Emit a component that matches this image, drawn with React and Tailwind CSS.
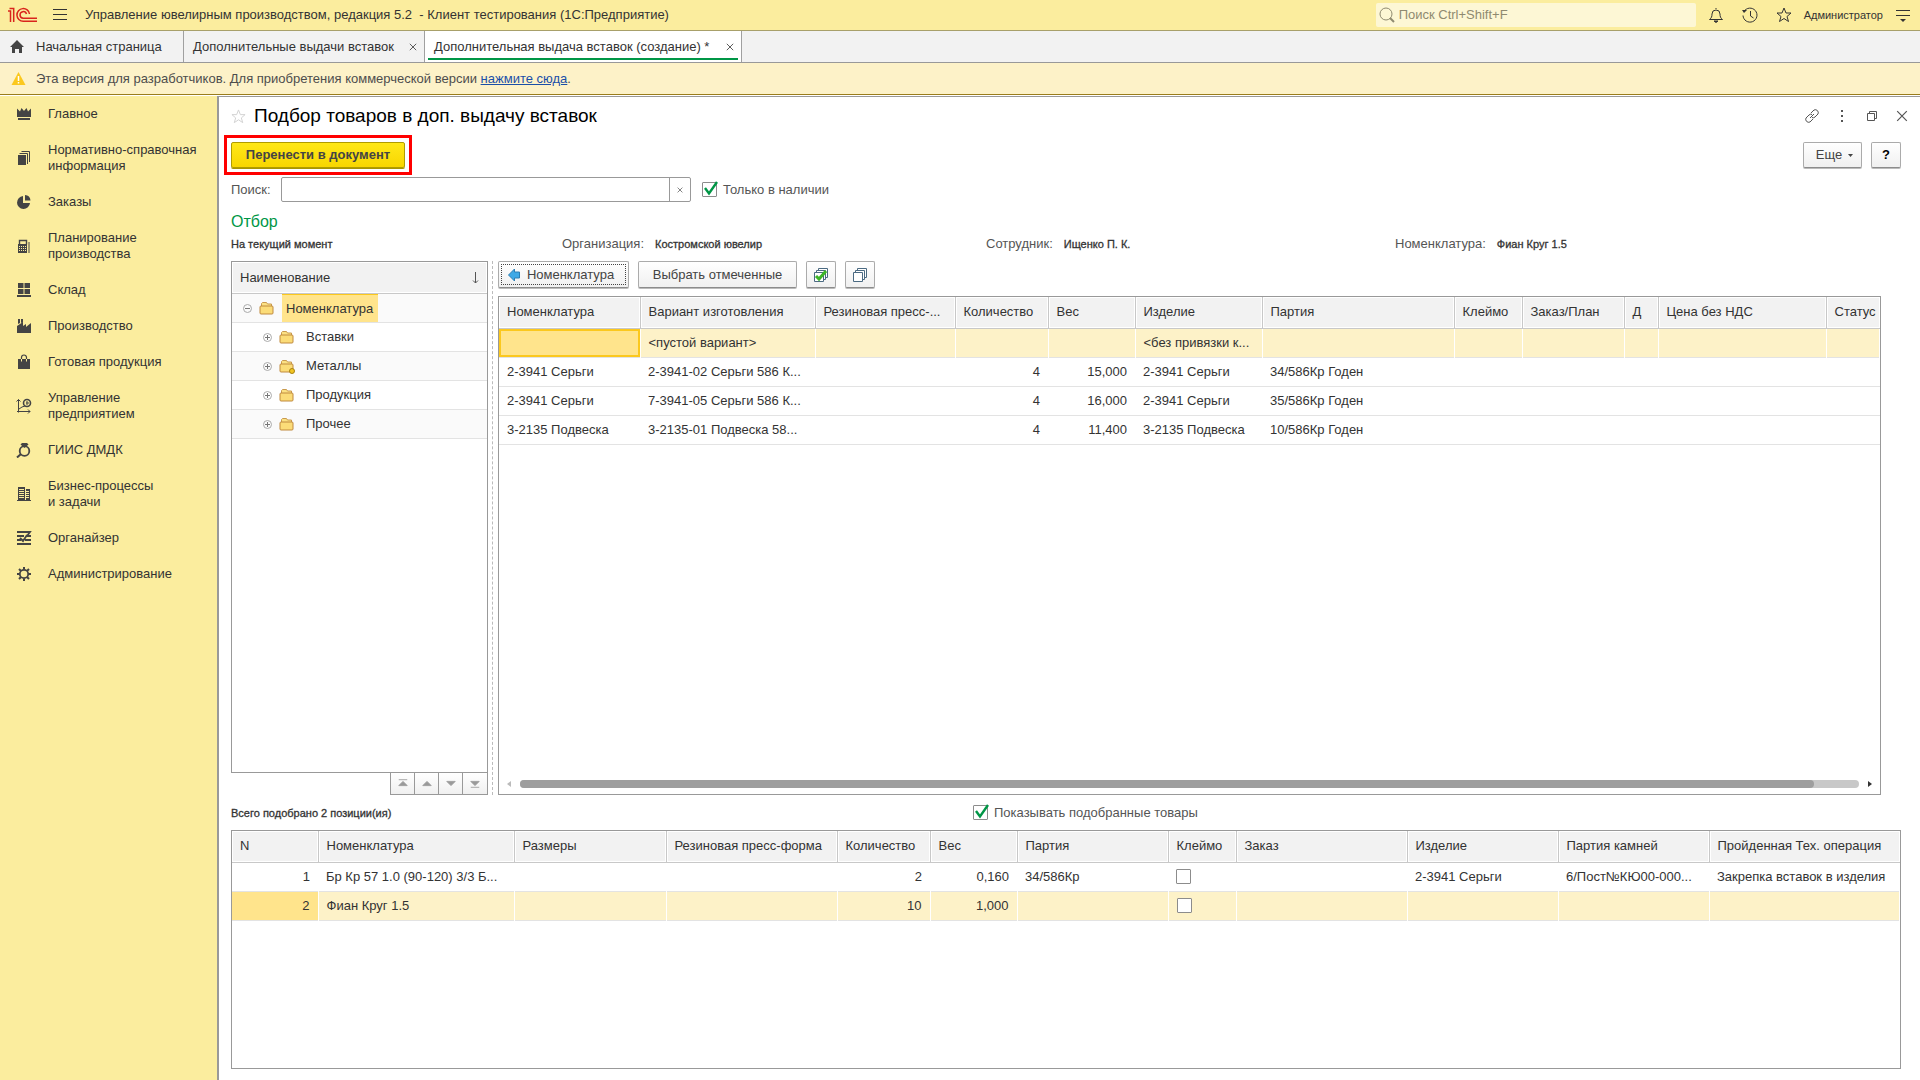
import React, { useState } from "react";

const MENU = [
  { label: "Главное", icon: "crown" },
  { label: "Нормативно-справочная\nинформация", icon: "books" },
  { label: "Заказы", icon: "pie" },
  { label: "Планирование\nпроизводства", icon: "calc" },
  { label: "Склад", icon: "blocks" },
  { label: "Производство", icon: "factory" },
  { label: "Готовая продукция", icon: "bag" },
  { label: "Управление\nпредприятием", icon: "chart" },
  { label: "ГИИС ДМДК", icon: "ring" },
  { label: "Бизнес-процессы\nи задачи", icon: "building" },
  { label: "Органайзер", icon: "organizer" },
  { label: "Администрирование", icon: "gear" },
];

const TREE = [
  { label: "Вставки" },
  { label: "Металлы", marked: true },
  { label: "Продукция" },
  { label: "Прочее" },
];

const STOCK_COLUMNS = [
  { title: "Номенклатура", width: "w-[141px]" },
  { title: "Вариант изготовления", width: "w-[175px]" },
  { title: "Резиновая пресс-...", width: "w-[140px]" },
  { title: "Количество", width: "w-[93px]", right: true },
  { title: "Вес", width: "w-[87px]", right: true },
  { title: "Изделие", width: "w-[127px]" },
  { title: "Партия", width: "w-[192px]" },
  { title: "Клеймо", width: "w-[68px]" },
  { title: "Заказ/План", width: "w-[102px]" },
  { title: "Д", width: "w-[34px]" },
  { title: "Цена без НДС", width: "w-[168px]" },
  { title: "Статус", width: "" },
];

const STOCK_ROWS = [
  ["", "<пустой вариант>", "", "", "", "<без привязки к...", "", "", "", "", "", ""],
  ["2-3941 Серьги", "2-3941-02 Серьги 586 К...", "", "4", "15,000", "2-3941 Серьги", "34/586Кр Годен", "", "", "", "", ""],
  ["2-3941 Серьги", "7-3941-05 Серьги 586 К...", "", "4", "16,000", "2-3941 Серьги", "35/586Кр Годен", "", "", "", "", ""],
  ["3-2135 Подвеска", "3-2135-01 Подвеска 58...", "", "4", "11,400", "3-2135 Подвеска", "10/586Кр Годен", "", "", "", "", ""],
];

const PICKED_COLUMNS = [
  { title: "N", width: "w-[86px]", right: true },
  { title: "Номенклатура", width: "w-[196px]" },
  { title: "Размеры", width: "w-[152px]" },
  { title: "Резиновая пресс-форма", width: "w-[171px]" },
  { title: "Количество", width: "w-[93px]", right: true },
  { title: "Вес", width: "w-[87px]", right: true },
  { title: "Партия", width: "w-[151px]" },
  { title: "Клеймо", width: "w-[68px]", check: true },
  { title: "Заказ", width: "w-[171px]" },
  { title: "Изделие", width: "w-[151px]" },
  { title: "Партия камней", width: "w-[151px]" },
  { title: "Пройденная Тех. операция", width: "" },
];

const PICKED_ROWS = [
  ["1", "Бр Кр 57 1.0 (90-120) 3/3 Б...", "", "", "2", "0,160", "34/586Кр", "", "", "2-3941 Серьги", "6/Пост№КЮ00-000...", "Закрепка вставок в изделия"],
  ["2", "Фиан Круг 1.5", "", "", "10", "1,000", "", "", "", "", "", ""],
];

const MENU_ICONS = {
  crown: (
    <path d="M1 2.500l3 3L5.500 2 8 5l2.500-3L12 5.500l3-3V11H1zM2 12h12v2H2z" fill="currentColor" />
  ),
  books: (
    <>
      <path d="M2 5h8v10H2z" fill="currentColor" />
      <path d="M3.500 3.500h8V14M5.500 1.500h8V12" fill="none" stroke="currentColor" />
    </>
  ),
  pie: (
    <path d="M7 2v7h7a6.500 6.500 0 1 1-7-7zM9 1a6 6 0 0 1 5.500 5.500H9z" fill="currentColor" />
  ),
  calc: (
    <>
      <path d="M3.500 6.500v-4h7v4" fill="none" stroke="currentColor" strokeWidth="1.400" />
      <path d="M2 6h9v9H2zM12.500 4h1v11h-1z" fill="currentColor" />
      <path d="M3 8.500h7M3 10.500h7M3 12.500h7" stroke="#fbed9e" strokeDasharray="1 1" />
    </>
  ),
  blocks: (
    <path d="M2 1h5.500v5H2zM8.500 1H14v5H8.500zM2 7h5.500v5H2zM8.500 7H14v5H8.500zM1 13h14v2H1z" fill="currentColor" />
  ),
  factory: (
    <path d="M2 1h2v4l-2 1zM5 1h2v3L5 5zM1 8l6-4v4l3-2v3l5-4v10H1z" fill="currentColor" />
  ),
  bag: (
    <>
      <path d="M2 5h12v10H2z" fill="currentColor" />
      <path d="M5.500 7V3.500a2.500 2.500 0 0 1 5 0V7" fill="none" stroke="currentColor" strokeWidth="1.200" />
      <path d="M5.500 5v2.500M10.500 5v2.500" stroke="#fbed9e" />
    </>
  ),
  chart: (
    <>
      <path d="M2.500 1.500v13M.5 3.500l2-2 2 2M1 13.500h13M12 11.500l2 2-2 2M3 11l3-2 3-1" fill="none" stroke="currentColor" />
      <circle cx="11" cy="5" r="3.500" fill="none" stroke="currentColor" strokeWidth="1.600" />
      <path d="M10 5h3M11 3v4" stroke="currentColor" />
    </>
  ),
  ring: (
    <>
      <circle cx="8.500" cy="9" r="4.800" fill="none" stroke="currentColor" strokeWidth="1.800" />
      <path d="M6 1h5l1.500 1.500L8.500 6 4.500 2.500z" fill="currentColor" />
      <path d="M5 12l-4 3.500" stroke="currentColor" strokeWidth="2" />
    </>
  ),
  building: (
    <>
      <path d="M2 1h7v13H2zM10 3h4v11h-4z" fill="currentColor" />
      <path d="M3 3.500h5M3 5.500h5M3 7.500h5M3 9.500h5M3 11.500h5M10 5.500h3M10 7.500h3M10 9.500h3M10 11.500h3" stroke="#fbed9e" />
      <path d="M1 14h14v1H1z" fill="currentColor" />
    </>
  ),
  organizer: (
    <path d="M1 2h13l-3 4M1 6h7M11 6h4M1 10h4M9 10h6M1 14h14M11 5l-4 6-3-3" fill="none" stroke="currentColor" strokeWidth="1.800" />
  ),
  gear: (
    <>
      <circle cx="8" cy="8" r="4.200" fill="none" stroke="currentColor" strokeWidth="1.800" />
      <path d="M8 1v2.500M8 12.500V15M1 8h2.500M12.500 8H15M3 3l2 2M11 11l2 2M13 3l-2 2M5 11l-2 2" stroke="currentColor" strokeWidth="2" />
    </>
  ),
};

const Folder = ({ marked }) => (
  <svg className="h-4 w-4 shrink-0" viewBox="0 0 16 16">
    <path d="M2.500 6V3.500l1-1h4l1 1.500h4V6" fill="#fbe183" stroke="#c99a4e" />
    <rect x="1" y="6" width="13" height="8" rx="1" fill="#fbdc78" stroke="#c08a3e" />
    {marked && <circle cx="13" cy="13" r="2.500" fill="#f2c522" stroke="#a8820f" />}
  </svg>
);

const Expander = ({ open }) => (
  <svg className="h-[9px] w-[9px]" viewBox="0 0 9 9" fill="none">
    <circle cx="4.500" cy="4.500" r="4" stroke="#aaa" />
    <path d={open ? "M2 4.500h5" : "M2 4.500h5M4.500 2v5"} stroke="#777" />
  </svg>
);

const Cross = ({ className }) => (
  <svg className={className} viewBox="0 0 10 10" fill="none" stroke="currentColor">
    <path d="M1 1l8 8M9 1L1 9" />
  </svg>
);

const Star = ({ className }) => (
  <svg className={className} viewBox="0 0 16 16" fill="none" stroke="currentColor">
    <path d="M8 1l2 5h5l-4 3.500 1.500 5L8 11.500l-4.500 3 1.500-5L1 6h5z" />
  </svg>
);

const Logo = () => (
  <svg className="h-4 w-[30px]" viewBox="0 0 30 16" fill="none" stroke="#d9241c" strokeWidth="1.500">
    <path d="M0 4h2.500v11M1.500 1.500H5.700V15" />
    <path d="M21.500 7a6.300 6.300 0 1 0-6.300 7.200H29" />
    <path d="M18.500 7a3.300 3.300 0 1 0-3.300 4.200H29" />
  </svg>
);

const CheckBox = ({ checked, onChange, label, id }) => (
  <span className="relative inline-flex h-[15px] w-[15px] shrink-0">
    <input
      id={id}
      type="checkbox"
      aria-label={label}
      checked={checked}
      onChange={onChange}
      className="h-[15px] w-[15px] appearance-none rounded-[1px] border border-[#8c8c8c] bg-white"
    />
    {checked && (
      <svg className="pointer-events-none absolute -top-px left-0 h-4 w-4" viewBox="0 0 16 16" fill="none">
        <path d="M3 7l4 5.500L15 1" stroke="#009646" strokeWidth="2.400" />
      </svg>
    )}
  </span>
);

const buttonStyle =
  "flex items-center justify-center rounded-xs border border-[#ababab] border-b-[#8c8c8c] bg-gradient-to-b from-white to-[#f0f0f0] text-[#444] shadow-[0_1px_0_#bbb]";

const Grid = ({ columns, rows, selected, framed, label }) => {
  const [marks, setMarks] = useState({});

  return (
    <table className="w-full table-fixed border-collapse text-left whitespace-nowrap" aria-label={label}>
      <thead>
        <tr className="h-[31px]">
          {columns.map((col) => (
            <th
              key={col.title}
              className={`${col.width} border-r border-b border-[#c8c8c8] bg-[#f2f2f2] pl-2 font-normal shadow-[inset_0_0_0_1px_#fff] last:border-r-0`}
            >
              {col.title}
            </th>
          ))}
        </tr>
      </thead>
      <tbody>
        {rows.map((row, r) => (
          <tr key={r} className={`h-[29px] border-b border-[#e3e3e3] ${r === selected ? "bg-[#fdf2c8]" : ""}`}>
            {row.map((cell, c) => {
              const isSelected = r === selected;
              const current = isSelected && c === 0;
              return (
                <td
                  key={c}
                  className={`pl-2 ${columns[c].right ? "pr-2 text-right" : ""} ${
                    isSelected ? "border-r border-r-white" : ""
                  } ${current ? "bg-[#ffe48c]" : ""} ${current && framed ? "shadow-[inset_0_0_0_2px_#fbc81e]" : ""}`}
                >
                  {columns[c].check ? (
                    <span className="flex">
                      <CheckBox
                        label={`Клеймо, строка ${r + 1}`}
                        checked={!!marks[r]}
                        onChange={() => setMarks({ ...marks, [r]: !marks[r] })}
                      />
                    </span>
                  ) : (
                    cell
                  )}
                </td>
              );
            })}
          </tr>
        ))}
      </tbody>
    </table>
  );
};

const TopBar = () => (
  <header className="flex h-[31px] items-center border-b border-[#a8a06a] bg-[#fbed9e] pl-2">
    <Logo />
    <button aria-label="Меню" className="ml-[14px]">
      <svg className="h-4 w-4" viewBox="0 0 16 16" stroke="#333">
        <path d="M1 2.500h14M1 7.500h14M1 12.500h14" />
      </svg>
    </button>
    <h1 className="ml-[17px] text-[13px] whitespace-pre">
      Управление ювелирным производством, редакция 5.2{"  "}- Клиент тестирования (1С:Предприятие)
    </h1>
    <label className="ml-auto flex h-6 w-80 items-center gap-1 rounded-xs bg-[#fdf7d5] px-[3px] text-[#8f8a70]">
      <svg className="h-4 w-4 shrink-0" viewBox="0 0 16 16" fill="none" stroke="currentColor">
        <circle cx="7" cy="7" r="6" />
        <path d="M11 11l4 4" strokeWidth="2" />
      </svg>
      <input
        type="search"
        aria-label="Глобальный поиск"
        placeholder="Поиск Ctrl+Shift+F"
        className="w-full bg-transparent text-[13px] outline-none placeholder:text-[#8f8a70]"
      />
    </label>
    <div className="ml-3 flex items-center gap-[18px]">
      <button aria-label="Оповещения">
        <svg className="h-4 w-4" viewBox="0 0 16 16" fill="none" stroke="#333">
          <path d="M8 1v1M1.500 12.500c2-1.500 2.500-3 2.500-5.500a4 4 0 0 1 8 0c0 2.500.5 4 2.500 5.500z" />
          <path d="M6 14h4l-2 1.500z" fill="#333" />
        </svg>
      </button>
      <button aria-label="История">
        <svg className="h-4 w-4" viewBox="0 0 16 16" fill="none" stroke="#333">
          <path d="M2 4.500a7 7 0 1 1-1 4M8.500 4v5l3 2" />
          <path d="M0 3h5L2 6z" fill="#333" stroke="none" />
        </svg>
      </button>
      <button aria-label="Избранное">
        <Star className="h-4 w-4 text-[#333]" />
      </button>
    </div>
    <span className="ml-3 text-[11px]">Администратор</span>
    <button aria-label="Сервис" className="mr-[9px] ml-3">
      <svg className="h-4 w-4" viewBox="0 0 16 16" stroke="#333">
        <path d="M1 3.500h14M1 8.500h14" />
        <path d="M5 12h6l-3 3z" fill="#333" stroke="none" />
      </svg>
    </button>
  </header>
);

const Tabs = () => (
  <nav className="flex h-8 border-b border-[#999] bg-[#f2f2f2] text-[13px]">
    <a href="#home" className="flex w-[184px] items-center border-r border-[#a0a0a0] pl-[10px]">
      <svg className="h-[14px] w-[14px]" viewBox="0 0 14 14" fill="#444">
        <path d="M7 0l7 7h-2v6H9V9H5v4H2V7H0z" />
      </svg>
      <span className="ml-3">Начальная страница</span>
    </a>
    <div className="flex w-[241px] items-center justify-between border-r border-[#a0a0a0] pr-[7px] pl-[9px]">
      <a href="#list">Дополнительные выдачи вставок</a>
      <button aria-label="Закрыть вкладку">
        <Cross className="h-2 w-2" />
      </button>
    </div>
    <div className="relative flex w-[317px] items-center justify-between border-r border-[#a0a0a0] bg-white pr-[7px] pl-[9px]">
      <a href="#create">Дополнительная выдача вставок (создание) *</a>
      <button aria-label="Закрыть вкладку">
        <Cross className="h-2 w-2" />
      </button>
      <span className="absolute inset-x-[3px] bottom-[2px] h-[2px] bg-[#009646]" />
    </div>
  </nav>
);

const Sidebar = () => (
  <aside className="w-[217px] shrink-0 bg-[#fbed9e]">
    {MENU.map((item) => (
      <a
        key={item.label}
        href="#section"
        className="flex items-center py-[10px] pr-3 pl-4 text-[13px] leading-4 text-[#333]"
      >
        <svg className="h-4 w-4 shrink-0 text-[#444]" viewBox="0 0 16 16">
          {MENU_ICONS[item.icon]}
        </svg>
        <span className="ml-4 whitespace-pre-line">{item.label}</span>
      </a>
    ))}
  </aside>
);

const Tree = () => (
  <div className="flex w-[257px] shrink-0 flex-col">
    <div className="flex-1 border border-[#999]">
      <div className="flex h-8 items-center justify-between border-b border-[#c8c8c8] bg-[#f2f2f2] px-2 shadow-[inset_0_0_0_1px_#fff]">
        <span>Наименование</span>
        <svg className="h-3 w-[7px]" viewBox="0 0 7 12" fill="none" stroke="#555">
          <path d="M3.500 0v11M1 8.500L3.500 11 6 8.500" />
        </svg>
      </div>
      <ul>
        <li className="flex h-[29px] items-center border-b border-[#e3e3e3] bg-[#fafafa] pl-[11px]">
          <Expander open />
          <span className="ml-[7px] flex">
            <Folder />
          </span>
          <span className="ml-[7px] flex h-full items-center border-t border-[#fbc81e] bg-[#ffe48c] pr-[5px] pl-1">
            Номенклатура
          </span>
        </li>
        {TREE.map((node) => (
          <li
            key={node.label}
            className="flex h-[29px] items-center border-b border-[#e3e3e3] pl-[31px] even:bg-white odd:bg-[#fafafa]"
          >
            <Expander />
            <span className="ml-[7px] flex">
              <Folder marked={node.marked} />
            </span>
            <span className="ml-[11px]">{node.label}</span>
          </li>
        ))}
      </ul>
    </div>
    <div className="ml-auto flex h-[22px] divide-x divide-[#999] border border-t-0 border-[#999]">
      {[
        ["В начало", "M2 2h10M7 4l5 5H2z"],
        ["Вверх", "M7 4l5 5H2z"],
        ["Вниз", "M7 9l5-5H2z"],
        ["В конец", "M7 9l5-5H2zM2 11h10"],
      ].map(([name, d]) => (
        <button key={name} aria-label={name} className="flex w-6 items-center justify-center bg-gradient-to-b from-white to-[#f0f0f0]">
          <svg className="h-[11px] w-3" viewBox="0 0 14 13" fill="#999" stroke="#999">
            <path d={d} strokeWidth="1" />
          </svg>
        </button>
      ))}
    </div>
  </div>
);

const Filter = ({ label, value }) => (
  <div className="flex items-center">
    {label && <span className="mr-[11px] text-[13px] text-[#555]">{label}</span>}
    <span className="text-[11px] text-[#333] [-webkit-text-stroke:0.3px_#333]">{value}</span>
  </div>
);

const App = () => {
  const [search, setSearch] = useState("");
  const [inStock, setInStock] = useState(true);
  const [showPicked, setShowPicked] = useState(true);

  return (
    <div className="flex min-h-screen flex-col bg-white font-['Liberation_Sans',Arial,sans-serif] text-[13px] leading-4 text-[#333]">
      <TopBar />
      <Tabs />

      {/* Developer version notice */}
      <div className="flex h-8 items-center border-b border-[#9a7d1c] bg-[#fdf2c8] pl-[11px] text-[13px] text-[#4d4d4d]">
        <svg className="mr-[10px] h-[15px] w-[15px]" viewBox="0 0 15 15">
          <path d="M7.500 1L14.500 14H.5z" fill="#fbc81e" />
          <path d="M7.500 5v5M7.500 11v1.500" stroke="#fff" strokeWidth="1.500" />
        </svg>
        <span>
          Эта версия для разработчиков. Для приобретения коммерческой версии{" "}
          <a href="#buy" className="text-[#1a4fa8] underline">нажмите сюда</a>.
        </span>
      </div>

      <div className="flex flex-1 pt-px">
        <Sidebar />

        <main className="flex min-w-0 flex-1 flex-col border-t border-l-2 border-[#999] bg-white pt-[7px] pr-[19px] pb-[11px] pl-3">
          {/* Window title */}
          <div className="flex h-6 items-center">
            <Star className="h-[15px] w-[15px] text-[#d0d0d0]" />
            <h2 className="ml-2 text-[19px] leading-6 text-black">Подбор товаров в доп. выдачу вставок</h2>
            <div className="-mr-[9px] ml-auto flex items-center gap-[14px] text-[#555]">
              <button aria-label="Ссылка">
                <svg className="h-4 w-4" viewBox="0 0 16 16" fill="none" stroke="currentColor">
                  <path d="M7 5l3-3a3 3 0 0 1 4 4l-3 3a2.500 2.500 0 0 1-3 .5M9 11l-3 3a3 3 0 0 1-4-4l3-3a2.500 2.500 0 0 1 3-.5M6 10l4-4" />
                </svg>
              </button>
              <button aria-label="Действия">
                <svg className="h-4 w-4" viewBox="0 0 16 16" fill="currentColor">
                  <path d="M7 2h2v2H7zM7 7h2v2H7zM7 12h2v2H7z" />
                </svg>
              </button>
              <button aria-label="Развернуть">
                <svg className="h-4 w-4" viewBox="0 0 16 16" fill="none" stroke="currentColor">
                  <path d="M3.500 5.500h7v7h-7zM5.500 5V3.500h7v7H11" />
                </svg>
              </button>
              <button aria-label="Закрыть" className="flex h-4 w-4 items-center justify-center">
                <Cross className="h-3 w-3" />
              </button>
            </div>
          </div>

          {/* Command bar */}
          <div className="mt-[7px] flex h-10 items-center">
            <div className="-ml-[7px] border-3 border-[#ff0000] p-1">
              <button className="h-[26px] w-[174px] rounded-xs border border-[#b09c00] bg-gradient-to-b from-[#ffe817] to-[#f8d600] text-[13px] font-bold text-[#444] shadow-[0_1px_0_#a89500]">
                Перенести в документ
              </button>
            </div>
            <button className={`${buttonStyle} ml-auto h-[26px] w-[59px] gap-[6px] pl-1`}>
              Еще
              <svg className="h-[3px] w-[5px]" viewBox="0 0 5 3" fill="#444">
                <path d="M0 0h5L2.500 3z" />
              </svg>
            </button>
            <button className={`${buttonStyle} ml-[9px] h-[26px] w-[30px] font-bold text-black`}>?</button>
          </div>

          {/* Search */}
          <div className="mt-[2px] flex h-[25px] items-center">
            <label htmlFor="search" className="w-[50px] text-[#555]">Поиск:</label>
            <div className="flex h-[25px] w-[410px] rounded-xs border border-[#999]">
              <input
                id="search"
                type="text"
                value={search}
                onChange={(e) => setSearch(e.target.value)}
                className="min-w-0 flex-1 px-2 outline-none"
              />
              <button
                aria-label="Очистить"
                onClick={() => setSearch("")}
                className="flex w-[21px] items-center justify-center border-l border-[#999]"
              >
                <Cross className="h-[6px] w-[6px]" />
              </button>
            </div>
            <span className="ml-[11px] flex">
              <CheckBox id="stock" checked={inStock} onChange={() => setInStock(!inStock)} />
            </span>
            <label htmlFor="stock" className="ml-[6px] text-[#555]">Только в наличии</label>
          </div>

          {/* Filters */}
          <h3 className="mt-[10px] text-[16px] leading-5 text-[#009646]">Отбор</h3>
          <div className="mt-1 mb-[9px] grid h-4 grid-cols-[331px_424px_409px_1fr] items-center">
            <Filter value="На текущий момент" />
            <Filter label="Организация:" value="Костромской ювелир" />
            <Filter label="Сотрудник:" value="Ищенко П. К." />
            <Filter label="Номенклатура:" value="Фиан Круг 1.5" />
          </div>

          <div className="flex flex-[537_1_0px] pr-5">
            <Tree />
            <div className="mr-[5px] ml-1 border-l border-dashed border-[#bbb]" />
            <section className="flex min-w-0 flex-1 flex-col">
              <div className="flex h-[27px] gap-[9px]">
                <button className={`${buttonStyle} w-[131px] gap-[7px] pr-[5px] outline-1 -outline-offset-4 outline-dotted outline-[#444]`}>
                  <svg className="h-[14px] w-3" viewBox="0 0 12 14">
                    <path d="M.5 7L6.500 1v3h5v6h-5v3z" fill="#3fa9e6" stroke="#2d7fb4" />
                  </svg>
                  Номенклатура
                </button>
                <button className={`${buttonStyle} w-[159px]`}>Выбрать отмеченные</button>
                <button aria-label="Отметить все" className={`${buttonStyle} w-[30px]`}>
                  <svg className="h-4 w-4" viewBox="0 0 16 16" fill="#fff" stroke="#4b6a82">
                    <path d="M5.500 1.500h9v9h-9z" />
                    <path d="M3.500 3.500h9v9h-9z" />
                    <path d="M1.500 5.500h9v9h-9z" />
                    <path d="M3 9l3 3 7-8" fill="none" stroke="#3db528" strokeWidth="3" />
                  </svg>
                </button>
                <button aria-label="Снять отметки" className={`${buttonStyle} w-[30px]`}>
                  <svg className="h-4 w-4" viewBox="0 0 16 16" fill="#fff" stroke="#4b6a82">
                    <path d="M5.500 1.500h9v9h-9z" />
                    <path d="M3.500 3.500h9v9h-9z" />
                    <path d="M1.500 5.500h9v9h-9z" />
                  </svg>
                </button>
              </div>

              <div className="mt-2 flex flex-1 flex-col border border-[#999]">
                <Grid label="Остатки" columns={STOCK_COLUMNS} rows={STOCK_ROWS} selected={0} framed />
                <div className="mt-auto flex h-5 items-center pr-2 pl-2">
                  <svg className="h-[6px] w-1" viewBox="0 0 4 6" fill="#bbb">
                    <path d="M4 0v6L0 3z" />
                  </svg>
                  <div className="mx-[9px] h-2 flex-1 rounded-full bg-[#c8c8c8]">
                    <div className="h-2 w-29/30 rounded-full bg-[#9e9e9e]" />
                  </div>
                  <svg className="h-[6px] w-1" viewBox="0 0 4 6" fill="#333">
                    <path d="M0 0v6l4-3z" />
                  </svg>
                </div>
              </div>
            </section>
          </div>

          <div className="flex h-[35px] items-center">
            <div className="w-[742px]">
              <Filter value="Всего подобрано 2 позиции(ия)" />
            </div>
            <CheckBox id="picked" checked={showPicked} onChange={() => setShowPicked(!showPicked)} />
            <label htmlFor="picked" className="ml-[6px] text-[#555]">Показывать подобранные товары</label>
          </div>

          <div className="flex-[238_1_0px] border border-[#999]">
            <Grid label="Подобранные товары" columns={PICKED_COLUMNS} rows={PICKED_ROWS} selected={1} />
          </div>
        </main>
      </div>
    </div>
  );
};

export default App;
